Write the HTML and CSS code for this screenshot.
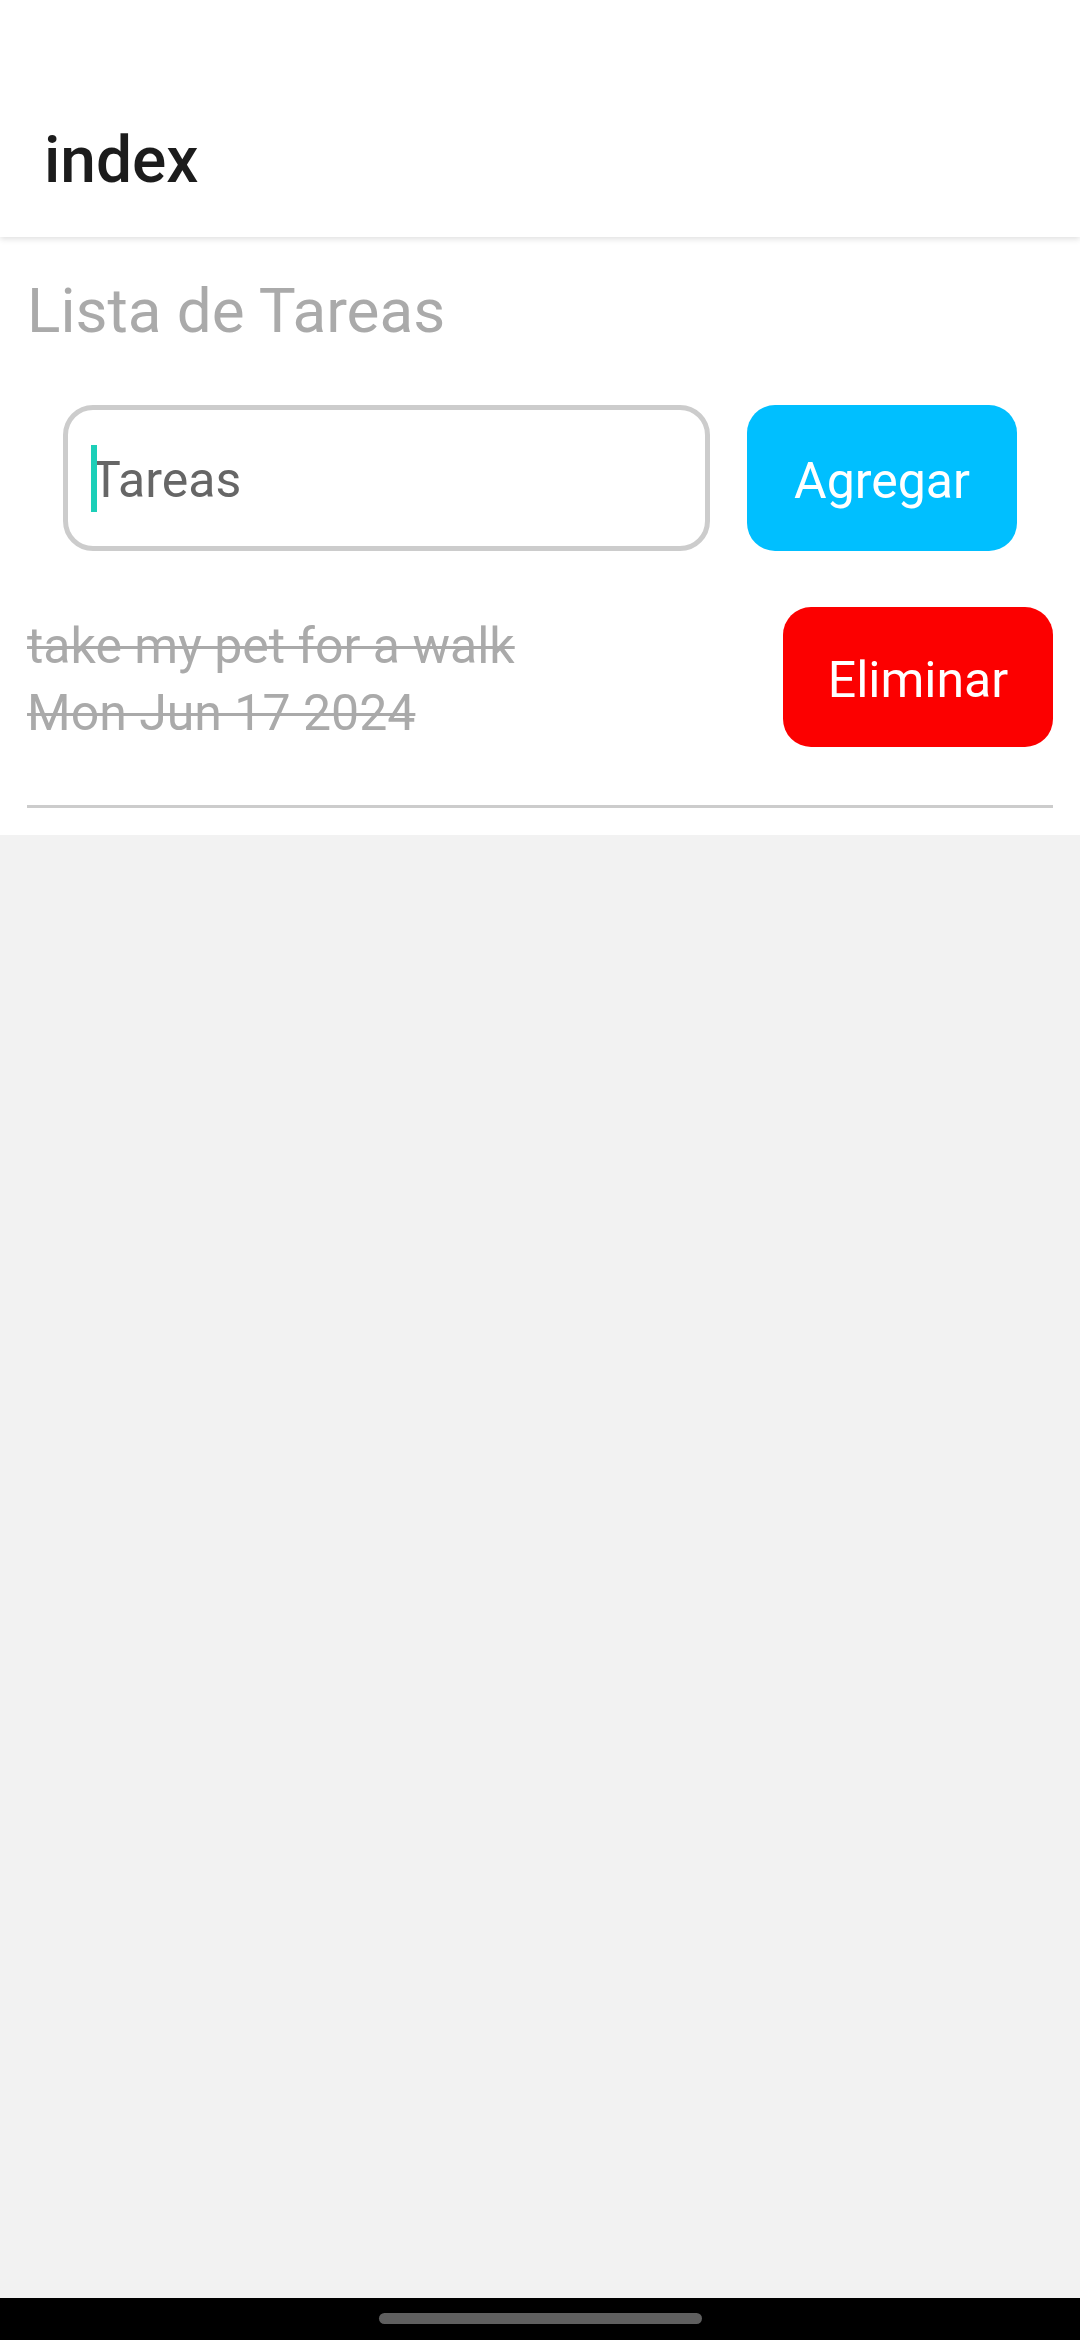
FILE: index.html
```html
<!DOCTYPE html>
<html lang="es">
<head>
<meta charset="utf-8">
<title>index</title>
<link rel="stylesheet" href="styles.css">
</head>
<body>
<div class="screen">
  <header class="appbar">
    <div class="appbar-title">index</div>
  </header>
  <main class="content">
    <h1 class="title">Lista de Tareas</h1>
    <div class="add-row">
      <div class="field"><span class="caret"></span><span class="placeholder">Tareas</span></div>
      <div class="btn btn-add">Agregar</div>
    </div>
    <div class="item">
      <div class="item-text">
        <div class="item-line">take my pet for a walk</div>
        <div class="item-line">Mon Jun 17 2024</div>
      </div>
      <div class="btn btn-delete">Eliminar</div>
    </div>
  </main>
  <div class="rest"></div>
  <div class="navbar"><div class="handle"></div></div>
</div>
</body>
</html>
```
FILE: styles.css
```css
* { box-sizing: border-box; }
html, body { margin: 0; padding: 0; }
body {
  font-family: Roboto, "Noto Sans", "Liberation Sans", sans-serif;
  background: #f2f2f2;
}
.screen {
  width: 1080px;
  height: 2340px;
  display: flex;
  flex-direction: column;
}
.appbar {
  height: 237px;
  background: #ffffff;
  display: flex;
  align-items: flex-end;
  padding: 0 0 36px 44px;
  box-shadow: 0 2px 6px rgba(0,0,0,0.13);
  position: relative;
  z-index: 2;
}
.appbar-title {
  font-size: 64px;
  font-weight: 500;
  color: #1c1c1c;
  line-height: 80px;
}
.content {
  background: #ffffff;
  padding: 34px 27px 27px;
}
.title {
  margin: 0;
  font-size: 62px;
  font-weight: 400;
  line-height: 80px;
  color: #aaaaaa;
}
.add-row {
  margin-top: 54px;
  padding: 0 36px;
  display: flex;
  gap: 37px;
}
.field {
  flex: 1;
  height: 146px;
  border: 5px solid #cccccc;
  border-radius: 30px;
  display: flex;
  align-items: center;
  padding-left: 23px;
}
.caret {
  width: 6px;
  height: 67px;
  margin-right: -6px;
  background: #1ccfb8;
  position: relative;
  z-index: 1;
}
.placeholder {
  font-size: 50px;
  color: #666666;
  padding-top: 4px;
}
.btn {
  width: 270px;
  display: flex;
  align-items: center;
  justify-content: center;
  color: #ffffff;
  font-size: 50px;
  border-radius: 28px;
  padding-top: 5px;
}
.btn-add {
  height: 146px;
  background: #00bfff;
}
.btn-delete {
  height: 140px;
  background: #fc0000;
}
.item {
  margin-top: 56px;
  padding-bottom: 58px;
  border-bottom: 3px solid #cccccc;
  display: flex;
  align-items: center;
  justify-content: space-between;
}
.item-text {
  padding-top: 5px;
  color: #aaaaaa;
  font-size: 50px;
  text-decoration: line-through;
  text-decoration-thickness: 3px;
}
.item-line {
  line-height: 67px;
}
.rest {
  flex: 1;
  background: #f2f2f2;
}
.navbar {
  height: 42px;
  background: #000000;
  display: flex;
  justify-content: center;
  padding-top: 15px;
}
.handle {
  width: 323px;
  height: 11px;
  border-radius: 6px;
  background: #5f5f5f;
}
```
